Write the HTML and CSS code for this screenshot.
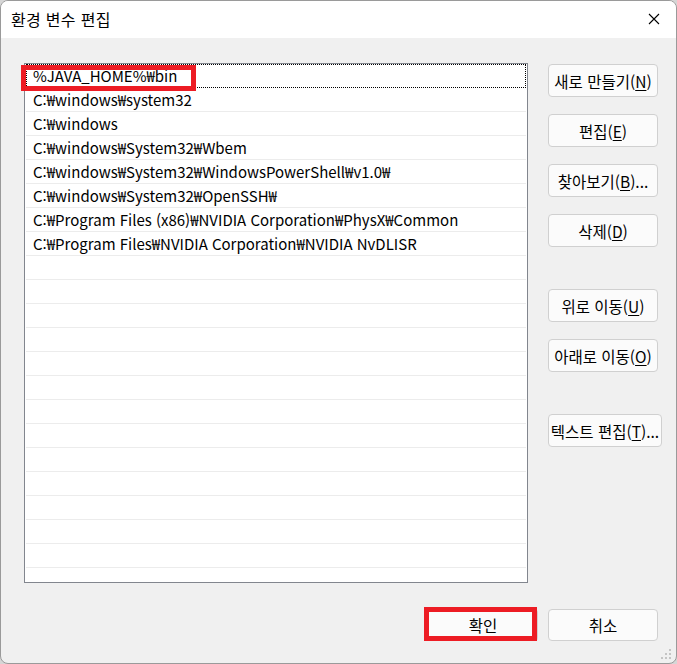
FILE: index.html
```html
<!DOCTYPE html>
<html lang="ko">
<head>
    <meta charset="UTF-8">
    <meta name="viewport" content="width=device-width, initial-scale=1.0">
    <title>환경 변수 편집</title>
    <link rel="stylesheet" href="styles.css">
</head>
<body>

<div class="window">
    <div class="titlebar">
        <span class="title">환경 변수 편집</span>
        <span class="close">
            <svg width="12" height="12" viewBox="0 0 12 12"><path d="M1 1L11 11M11 1L1 11" stroke="#000" stroke-width="1.1" fill="none"/></svg>
        </span>
    </div>

    <div class="content">
        <div class="main">
            <div class="list-wrap">
                <div class="list">
                    <div class="row focused">%JAVA_HOME%₩bin</div>
                    <div class="row">C:₩windows₩system32</div>
                    <div class="row">C:₩windows</div>
                    <div class="row">C:₩windows₩System32₩Wbem</div>
                    <div class="row">C:₩windows₩System32₩WindowsPowerShell₩v1.0₩</div>
                    <div class="row">C:₩windows₩System32₩OpenSSH₩</div>
                    <div class="row">C:₩Program Files (x86)₩NVIDIA Corporation₩PhysX₩Common</div>
                    <div class="row">C:₩Program Files₩NVIDIA Corporation₩NVIDIA NvDLISR</div>
                    <div class="row"></div>
                    <div class="row"></div>
                    <div class="row"></div>
                    <div class="row"></div>
                    <div class="row"></div>
                    <div class="row"></div>
                    <div class="row"></div>
                    <div class="row"></div>
                    <div class="row"></div>
                    <div class="row"></div>
                    <div class="row"></div>
                    <div class="row"></div>
                    <div class="row"></div>
                    <div class="row"></div>
                </div>
                <div class="mark mark-item"></div>
            </div>

            <div class="side">
                <button class="btn">새로 만들기(<u>N</u>)</button>
                <button class="btn">편집(<u>E</u>)</button>
                <button class="btn">찾아보기(<u>B</u>)...</button>
                <button class="btn">삭제(<u>D</u>)</button>
                <button class="btn group">위로 이동(<u>U</u>)</button>
                <button class="btn">아래로 이동(<u>O</u>)</button>
                <button class="btn group wide">텍스트 편집(<u>T</u>)...</button>
            </div>
        </div>

        <div class="footer">
            <div class="ok-wrap">
                <button class="btn default">확인</button>
                <div class="mark mark-ok"></div>
            </div>
            <button class="btn">취소</button>
        </div>
    </div>

    <div class="grip">
        <svg width="12" height="12" viewBox="0 0 12 12" fill="#c4c4c4">
            <rect x="8" y="0" width="2" height="2"/>
            <rect x="4" y="4" width="2" height="2"/>
            <rect x="8" y="4" width="2" height="2"/>
            <rect x="0" y="8" width="2" height="2"/>
            <rect x="4" y="8" width="2" height="2"/>
            <rect x="8" y="8" width="2" height="2"/>
        </svg>
    </div>
</div>

</body>
</html>
```

FILE: styles.css
```css
body {
    margin: 0;
    padding: 0;
    background-color: #d6d6d6;
    font-family: "Noto Sans CJK KR", "Noto Sans", sans-serif;
    font-size: 15px;
    color: #000;
}
.window {
    position: relative;
    width: 677px;
    height: 664px;
    box-sizing: border-box;
    border: 1px solid #9a9a9a;
    border-radius: 8px;
    background-color: #f0f0f0;
    overflow: hidden;
}
.titlebar {
    height: 37px;
    background-color: #fff;
    display: flex;
    align-items: center;
    justify-content: space-between;
    padding: 0 16px 0 10px;
}
.title {
    font-size: 16px;
    line-height: 20px;
    letter-spacing: 0.3px;
    margin-top: -1px;
}
.close {
    display: flex;
    margin-top: -1px;
}
.content {
    padding: 25px 18px 0 23px;
}
.main {
    display: flex;
    gap: 20px;
}
.list-wrap {
    position: relative;
    flex-shrink: 0;
}
.list {
    width: 504px;
    height: 520px;
    box-sizing: border-box;
    border: 1px solid #82868e;
    background-color: #fff;
    overflow: hidden;
    padding: 0 1px;
}
.row {
    height: 24px;
    box-sizing: border-box;
    border-bottom: 1px solid #ececec;
    padding-left: 7px;
    line-height: 23px;
    white-space: nowrap;
}
.focused {
    outline: 1px dotted #000;
    outline-offset: -1px;
    border-bottom-color: transparent;
}
.mark {
    position: absolute;
    border: 5px solid #ed1c24;
    pointer-events: none;
}
.mark-item {
    left: -3px;
    top: 2px;
    width: 165px;
    height: 16px;
}
.side {
    display: flex;
    flex-direction: column;
    align-items: flex-start;
    width: 110px;
    gap: 17px;
    padding-top: 1px;
}
.btn {
    width: 110px;
    height: 33px;
    box-sizing: border-box;
    border: 1px solid #d0d0d0;
    border-radius: 4px;
    background-color: #fbfbfb;
    font-family: "Noto Sans CJK KR", "Noto Sans", sans-serif;
    font-size: 15.5px;
    color: #000;
    padding: 0;
    white-space: nowrap;
    flex-shrink: 0;
}
.btn u {
    text-underline-offset: 2px;
}
.group {
    margin-top: 25px;
}
.wide {
    width: 114px;
}
.footer {
    display: flex;
    justify-content: flex-end;
    gap: 10px;
    margin-top: 26px;
}
.footer .btn {
    height: 32px;
}
.ok-wrap {
    position: relative;
}
.default {
    border-bottom: 2px solid #005fb8;
}
.mark-ok {
    left: -4px;
    top: -2px;
    width: 103px;
    height: 24px;
}
.grip {
    position: absolute;
    right: 3px;
    bottom: 2px;
    display: flex;
}
```
